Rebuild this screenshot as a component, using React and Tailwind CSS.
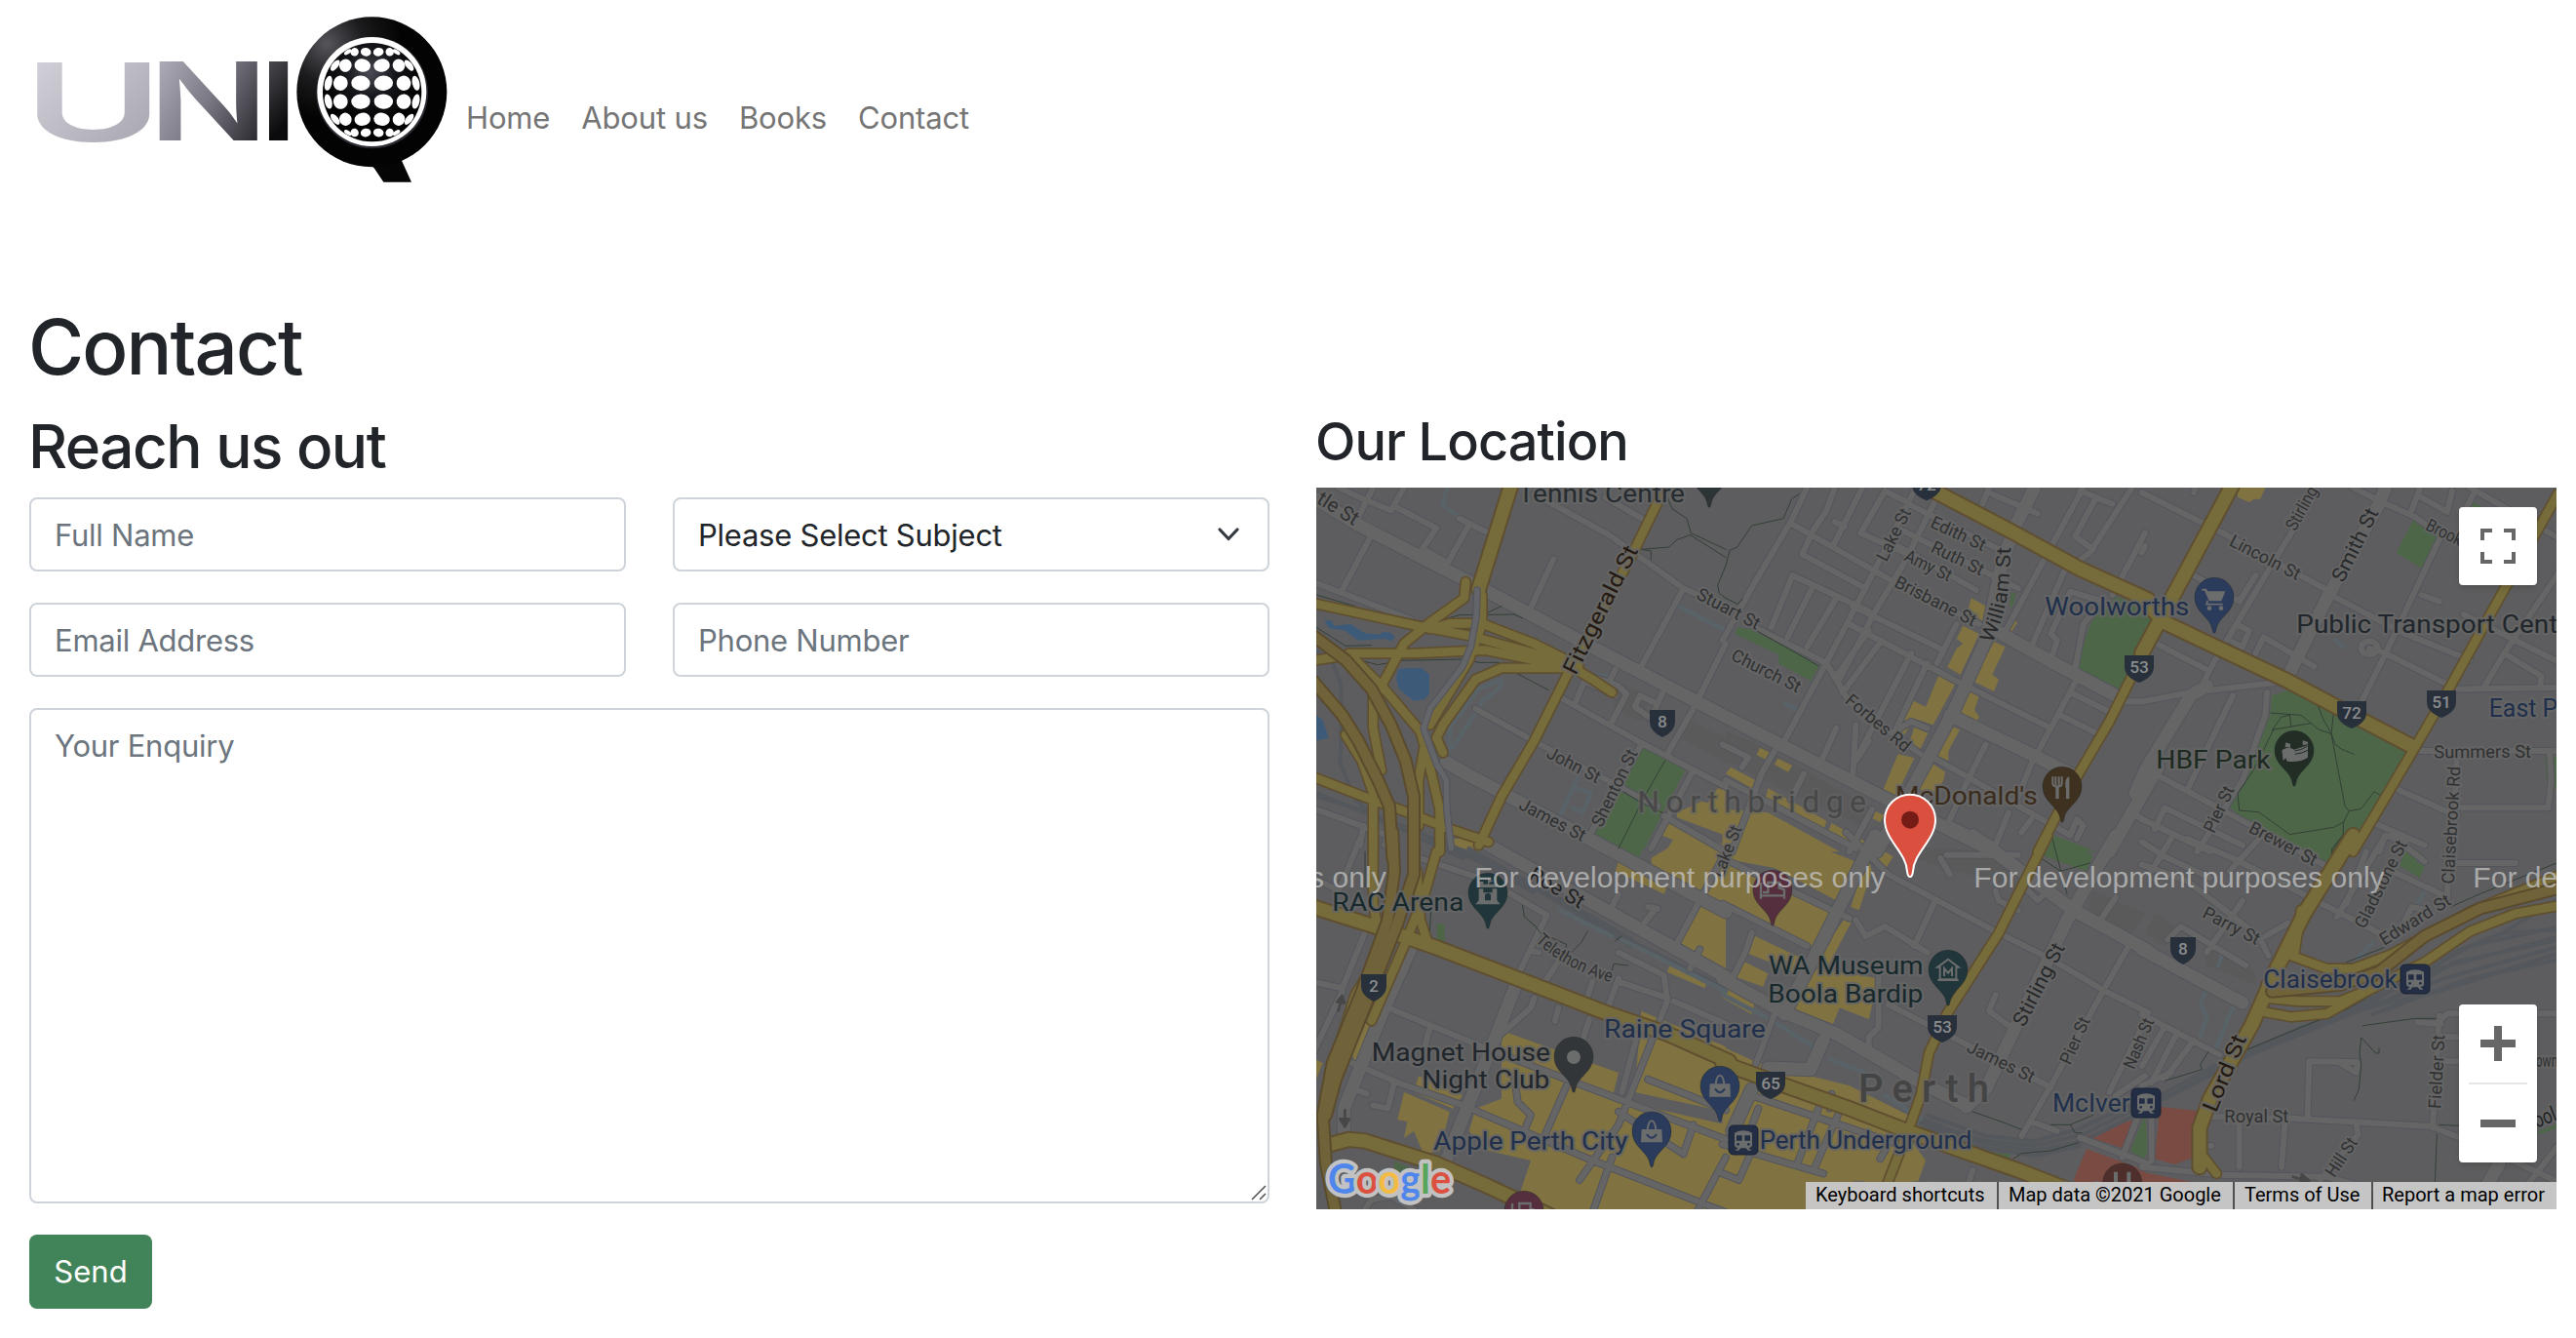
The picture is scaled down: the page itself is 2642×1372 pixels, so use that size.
import React from "react";

/* ---------- Logo ---------- */
const HOLES = [];
for (const lat of [-57, -34, -11, 11, 34, 57]) {
  for (const lon of [-68, -42, -14, 14, 42, 68]) {
    const a = (lat * Math.PI) / 180;
    const o = (lon * Math.PI) / 180;
    const k = Math.abs(lat) > 50 ? 0.55 : Math.abs(lat) > 30 ? 0.85 : 1;
    HOLES.push({
      x: 1085 + 148 * Math.cos(a) * Math.sin(o),
      y: 284 - 148 * Math.sin(a),
      rx: Math.max(4, 30 * Math.cos(o) * k),
      ry: Math.abs(lat) > 50 ? 13 : Math.abs(lat) > 30 ? 20 : 23,
      r: -lon * Math.sin(a),
    });
  }
}

function Logo() {
  return (
    <svg viewBox="0 0 1350 600" className="h-[200px] w-[450px] shrink-0" role="img" aria-label="UNIQ">
      <defs>
        <linearGradient id="gU" x1="0" y1="0" x2="1" y2="1">
          <stop offset="0" stopColor="#d9d8e0" />
          <stop offset="1" stopColor="#a09faa" />
        </linearGradient>
        <linearGradient id="gN" x1="0" y1="0.2" x2="1" y2="0.8">
          <stop offset="0" stopColor="#b5b3bf" />
          <stop offset="0.5" stopColor="#7a7883" />
          <stop offset="1" stopColor="#1e1d22" />
        </linearGradient>
        <linearGradient id="gI" x1="0" y1="0" x2="0.3" y2="1">
          <stop offset="0" stopColor="#66656c" />
          <stop offset="0.8" stopColor="#0b0b0d" />
        </linearGradient>
        <radialGradient id="gQ" cx="0.2" cy="0.18" r="0.5">
          <stop offset="0" stopColor="#55555b" />
          <stop offset="0.5" stopColor="#1b1b1d" />
          <stop offset="1" stopColor="#030303" />
        </radialGradient>
        <radialGradient id="gG" cx="0.48" cy="0.3" r="0.5">
          <stop offset="0" stopColor="#4a4b54" />
          <stop offset="0.5" stopColor="#15161a" />
          <stop offset="1" stopColor="#020202" />
        </radialGradient>
      </defs>
      <g fontFamily="Inter, sans-serif" fontWeight="600" fontSize="334">
        <text x="12" y="434" textLength="430" lengthAdjust="spacingAndGlyphs" fill="url(#gU)">U</text>
        <text x="395" y="433" textLength="372" lengthAdjust="spacingAndGlyphs" fill="url(#gN)">N</text>
        <text x="736" y="433" textLength="122" lengthAdjust="spacingAndGlyphs" fill="url(#gI)">I</text>
      </g>
      <path d="M1075 500L1092 518L1120 560H1206L1176 494L1190 470Z" fill="#050505" />
      <circle cx="1084" cy="283" r="231" fill="url(#gQ)" />
      <circle cx="1085" cy="285" r="172" fill="#2c2c33" />
      <circle cx="1084" cy="282" r="168" fill="#fff" />
      <circle cx="1085" cy="284" r="152" fill="url(#gG)" />
      {HOLES.map((h, i) => (
        <ellipse key={i} cx={h.x} cy={h.y} rx={h.rx} ry={h.ry} fill="#fff" transform={`rotate(${h.r} ${h.x} ${h.y})`} />
      ))}
    </svg>
  );
}

/* ---------- Map data: six tiles, coordinates local to each tile ---------- */
const TILES = [
  {
    x: 0, y: 0,
    green: ["M1030 858L1167 925L1040 1170H960L885 1130Z"],
    water: [
      "M55 470L75 467L85 485L135 480L180 508L225 512L235 503L260 507L272 520L262 532L240 525L158 530L120 500L70 493Z",
      "M280 620L300 615H355L378 635V695L362 712L330 717L285 680L276 650Z",
      "M30 760L50 775L68 830L35 838L20 835Z",
    ],
    shop: ["M1140 1060L1215 1025L1235 1030L1265 985L1290 990V1130L1140 1075Z", "M1110 1087L1162 1110L1145 1150L1093 1130Z", "M1185 1130L1290 1180H1165Z"],
    block: ["M960 660L1060 700L1030 780L945 740Z", "M1180 775L1290 830V905L1150 830Z"],
    stream: ["M432 60L418 115L470 150", "M1145 425L1290 500", "M600 650L530 680L440 800V870", "M600 650L595 675L540 720L450 860", "M835 950L780 1070M830 985L875 1000L850 1060L820 1045", "M880 635L930 640"],
    path: ["M1110 90L1125 125L1170 155L1183 200L1290 250M1183 207L1290 275", "M1183 205L1140 220L1115 243L1030 250L1060 255V280", "M30 390L150 425M320 472H400L470 452L640 450L665 462", "M30 490L120 547L200 545M180 595L220 605L290 592L480 588L530 598H590", "M640 628L745 683", "M1103 900L1040 1010L960 1170M975 995L1030 1030L1095 1060", "M545 450L600 425", "M1290 300L1265 360L1270 385L1290 400"],
    rail: ["M30 560L80 600L105 660L108 740L104 910L150 1020L260 1110", "M30 1010L200 1060L330 1130L480 1200", "M30 1000L180 1060L320 1110L460 1170"],
    minor: ["M100 60L185 100L260 130L300 60", "M205 60L160 150", "M275 120L400 185L355 250", "M470 155L550 195", "M500 175L435 290", "M370 255L430 290", "M200 205L110 375", "M20 350L320 465", "M760 280L690 430", "M700 80L930 205L1160 370L1290 430", "M920 90L1040 160", "M1160 370L1030 610", "M1290 540L1190 740L1110 880", "M1030 850L870 1130", "M520 740L700 840L1000 1000L1080 1040", "M780 705L1020 840L1290 980", "M830 715L855 655L950 700", "M875 640L960 670L985 695L940 780", "M950 620L935 650", "M1060 770L1010 735L1025 700L1080 725L1060 770M1080 725L1095 690", "M1190 930L1060 1170", "M1100 1070L1290 1180", "M30 1050L250 1130L240 1160M175 1100L165 1160"],
    mid: ["M20 90L160 175L520 360L840 530L1290 765", "M430 905L500 945L850 1130L1290 1365"],
    over: ["M525 375L522 460L505 550L480 610L380 740L360 800L400 910L430 960L432 1050L445 1170"],
    hw: ["M20 415L340 485L500 515L700 570L830 620", "M490 350L485 400L380 475L300 540L220 690", "M540 390V480L500 590L380 790", "M380 495L440 478H540L700 540L800 590", "M130 570L330 570L550 560L700 590L830 610", "M20 592L130 575", "M820 615H600L520 650L420 790L400 830L420 875", "M830 620L880 650L940 690", "M1090 85L1010 250L900 460L800 640L700 840L600 1010L530 1160", "M150 590L240 680L350 810L375 900L410 1050V1180", "M205 700V800L230 930", "M120 820L170 900L205 1000V1180", "M365 840L345 960V1100", "M20 950L200 1020L300 1055L440 1110L560 1150"],
    hwWide: ["M630 50L530 372", "M680 575L830 610"],
    mway: ["M20 515L120 590L200 680L260 790L305 900L330 1010V1200", "M20 655L110 760L160 840L220 960L255 1040L265 1200"],
  },
  {
    x: 1290, y: 0,
    green: ["M35 490L100 500L287 608L262 655L160 600L165 575L30 510Z", "M1130 465L1200 395L1290 420V560L1205 685L1080 615L1110 510Z", "M878 380L893 388L880 430L873 425Z", "M1010 1130L1140 1180H980Z"],
    shop: ["M755 400L807 428L790 470L745 440Z", "M730 485L780 510L722 635L682 612L710 555L730 540L710 525Z", "M885 465L897 475L875 510L858 495Z", "M825 535L860 550L820 635L840 650L825 687L760 655Z", "M657 632L708 660L638 790L580 770L550 820L525 815L575 715L615 735Z", "M745 682L780 700L765 745L780 765L770 783L707 750Z", "M683 790L720 805L685 870V900L637 880Z", "M580 797L622 815L597 867L563 850Z", "M530 880L580 892L520 1015L478 1005Z", "M627 903L675 935L670 960L640 1010L590 985Z", "M105 860L137 875L125 898L95 882Z", "M160 893L205 915L192 935L150 912Z", "M15 920L90 960L80 985L0 940Z", "M130 985L310 1085L300 1120L120 1030Z", "M325 1092L395 1130L380 1160L312 1128Z", "M460 1055L487 1068L475 1090L452 1078Z", "M0 1050L130 1060L350 1180H0Z", "M410 1140L445 1155L435 1180H395Z"],
    block: ["M0 810L100 850L330 980L440 1040L420 1100L200 1000L0 900Z"],
    stream: ["M185 725L215 740"],
    path: ["M225 80L203 95L177 155L80 177L35 243L12 253L0 300", "M0 400L35 418L52 403", "M95 500L285 608"],
    minor: ["M250 60L200 165L90 350L-10 530", "M335 60L310 130L270 190L235 265L430 370", "M200 170L500 340", "M420 60L335 230", "M335 165L365 180", "M585 60L460 310L330 560L180 840", "M490 70L415 200L550 260", "M650 90L550 290L460 440L350 650", "M560 110L860 260", "M490 70L560 105", "M540 190L820 330L900 370", "M530 240L770 375", "M500 340L780 480", "M390 425L670 560", "M380 480L700 650L1000 800", "M710 480L650 600", "M140 490L205 330L270 360L440 440", "M270 360L190 520", "M340 400L250 550", "M480 530L360 690", "M570 570L420 860L400 900", "M620 600L520 810L570 780L620 800", "M440 500L340 640", "M90 490L310 600L380 720L600 880", "M810 60L790 110", "M820 80L960 140", "M1100 60L850 520", "M1090 70L1190 110", "M1140 90L1075 210L1130 250", "M1250 60L1120 260L1040 320L940 550", "M1290 200L1190 390", "M1060 380L1000 510L1020 530L1000 590", "M1060 380L1160 410L1100 480L1075 620", "M1080 650L1000 800L940 910L900 1010", "M1060 690L1180 750", "M1030 760L1150 820", "M240 940L200 1020", "M400 790L390 960M440 840L400 900", "M340 800L290 910", "M150 870L110 940L20 1180", "M-10 850L70 890L50 920", "M800 850L740 970L690 1080", "M620 880L1060 1130", "M680 1090L830 1160L870 1060", "M940 1080L910 1120", "M1060 1130L1080 1080L1100 1100L1080 1140", "M1230 718H1290", "M0 960L400 1170", "M1250 1060L1290 1085", "M450 1050L380 1180"],
    mid: ["M-10 760L480 1010L830 1180", "M950 60L890 180L850 290L800 530L700 750L560 1010L465 1180", "M830 500L1010 600L1210 705", "M690 760L960 890L1060 940", "M1330 920L1180 1180"],
    hw: ["M1290 560L1180 780L1080 950L960 1180"],
    hwWide: ["M640 70L870 190L1090 310L1300 405"],
  },
  {
    x: 2580, y: 0,
    green: ["M390 700L440 683L590 750L810 870L630 1180L420 1150L280 1060L250 1035L290 970L385 760Z", "M825 160L908 220L862 315L773 260Z", "M1003 100L1045 125L1000 135Z", "M1230 880L1266 890V990L1235 960Z", "M0 450L20 460L0 520Z"],
    shop: ["M285 60H370L355 95H335L322 105L285 90Z"],
    stream: ["M585 530L610 550", "M150 330L200 350"],
    path: ["M388 753L480 760L535 805L573 817L585 850L605 865L643 880M445 760L450 795M392 805L420 765L445 760M392 805L510 785M530 725L545 765L573 817L580 755M573 817L615 1040L628 1055L665 1048L705 995L722 1005M628 1055L610 1090L580 1105L445 1127L350 1058L290 1053L285 1000L330 935L395 805M610 1090V1125L575 1180"],
    minor: ["M-10 75L230 195L560 375", "M530 70L370 330L210 600L180 660", "M640 60L730 105L830 150L900 200", "M910 210L740 570L660 730", "M845 65L820 130M850 90L930 135L945 70", "M850 390L905 410", "M590 400L800 510L1000 590", "M690 555L740 570L930 665", "M665 550A25 20 0 1 0 715 555A25 20 0 1 0 665 550", "M950 680L1280 675", "M845 870H1280", "M960 880L945 1180", "M970 1045H1240L1250 960L1245 880", "M1105 570L1220 640L1215 670", "M1280 310L1105 570L1045 670", "M980 450L1280 600", "M780 990L960 1070", "M700 1090L860 1160", "M-10 718L140 690L400 660", "M375 690L370 760L300 960L160 1180", "M270 700L130 990", "M30 940L560 1225", "M30 1110L60 1045L300 1160", "M-10 1080L200 1180", "M35 540L190 620", "M150 330L290 410L340 330", "M280 480L320 500L300 550L270 535", "M340 570L365 520L520 610", "M1000 60L1280 220", "M1010 80L980 140", "M155 60L150 75", "M720 1180L740 1130L800 1150", "M-10 260L0 240"],
    mid: ["M740 60L720 110L560 400L440 640", "M190 670L140 700L0 930L-30 1000"],
    hw: ["M1270 80L1090 400L940 670L830 860L700 1080L640 1180"],
    hwWide: ["M270 50L120 330L-10 570", "M-10 400L60 475L440 655", "M440 655L600 740L820 855"],
  },
  {
    x: 0, y: 1140,
    green: ["M400 262L425 262V318L402 310Z", "M270 990L350 1030L300 1050L270 1030Z", "M905 0H1050L1020 65Z"],
    shop: ["M430 0H570L530 40L440 20Z", "M960 70L1070 130L1060 60L1110 30L1150 -30L1290 20V420L1150 320L1230 180L1120 120L1100 170L950 100Z", "M600 590L960 720L940 800L1290 880V1140H640L690 990L560 960L500 900L520 830L600 800Z", "M300 780L440 840L410 960L360 970L330 900L300 920L310 870L280 865Z", "M345 730L480 790L450 830L330 780Z", "M1030 530L1290 640V840L1010 780Z", "M205 520L220 540L150 690L140 660Z", "M1120 380L1235 430L1225 460L1110 410Z", "M30 680L50 690L30 740Z"],
    block: [],
    stream: ["M790 340L740 420", "M780 220L940 300M970 310L1290 470"],
    path: ["M180 40V150M385 180L378 310", "M665 205L670 240L705 270L720 290L800 325L790 370", "M865 285L845 320L815 350", "M940 405L945 385L990 390M950 315L970 300"],
    rail: ["M380 0L700 150L1000 330", "M400 0L720 150L1000 310", "M500 30L950 290L1290 460", "M440 20L700 165"],
    minor: ["M20 120L100 160L165 0", "M20 440L110 460L200 240", "M20 660L110 470", "M250 520L540 640L800 740L1290 925", "M380 580L350 690", "M700 490L690 520L600 600", "M140 690L280 750L480 820L880 990L1290 1150", "M270 750L250 830L205 820", "M145 770L185 785", "M350 60L560 130L740 235L650 420", "M690 345L715 350", "M780 370L720 460", "M775 520L765 560M870 555L850 620L810 720", "M880 440L860 500", "M960 430L920 540", "M960 350L1100 420L1110 500L960 880L840 1050", "M640 740L650 810L690 850L670 900", "M800 760L730 920", "M1050 740L1290 835", "M940 980L880 1150", "M1030 560L970 780", "M1290 40L1130 340", "M930 30L1290 230", "M960 170L930 230M1075 215L1030 270M1080 215L1050 210", "M1210 340L1180 400", "M960 840L1160 970L1190 880", "M1290 980L1200 1150", "M1130 500L1290 570M960 440L1110 490", "M180 1140L200 1110L260 1100L330 1140"],
    mid: ["M560 20L940 230L1290 425", "M320 340L240 520L115 830V900", "M640 460L570 640L425 1000"],
    hw: ["M400 40L360 180L300 330L200 560", "M205 -20V200L220 280", "M340 100L350 250L370 310", "M200 400L150 480L100 640"],
    hwWide: ["M20 210L210 270L400 335L700 450L920 535L1110 600L1300 685", "M75 940L130 925L180 930L400 1000L560 1070L750 1160"],
    mway: ["M265 -20L270 100L250 250L170 470L80 690L50 850L60 1000L90 1150", "M330 -20V110L280 260L190 490L90 740L60 850"],
    arrow: ["M98 530L107 492M94 502L109 483L117 505Z", "M118 835V870M103 862L118 886L131 862Z"],
  },
  {
    x: 1290, y: 1140,
    green: ["M1005 0L1130 50L1110 100L970 50Z", "M760 960L875 970L865 1000L800 985Z", "M1245 960L1290 850V990Z"],
    red: ["M1110 915L1265 860L1220 952Z", "M1110 955L1290 1020V1140H1150L1070 1050Z"],
    shop: ["M-10 -20L100 -50L410 75L350 195L150 90L-10 60Z", "M-10 70L330 220L270 340L110 260L-10 200Z", "M90 300L260 380L240 420L60 350Z", "M50 375L130 415L115 455L30 425Z", "M370 240L390 250L310 400L270 380Z", "M280 400L470 430L440 555L350 520L330 570L200 520Z", "M435 50L385 210L410 220L450 100Z", "M480 35L515 55L490 95L460 75Z", "M-10 450L90 500L80 540L-10 490Z", "M-10 640L100 690L380 760L560 850L550 900L615 990L590 1060L560 1140H-10Z"],
    block: ["M480 20L830 40L900 150L640 80Z", "M1130 160L1290 230L1250 290L1110 220Z"],
    stream: ["M-10 480L125 550M150 565L300 660M320 680L430 720M490 790L600 860"],
    path: ["M1005 0L1030 95L1050 170M970 60L1030 100L1120 75", "M760 840L860 875L910 895", "M1000 880H1060L1130 850M1060 880L1075 905H1095", "M885 985L910 968L1000 960L1085 935"],
    rail: ["M600 860L700 900L800 930L950 945L1100 910L1300 810", "M600 875L760 930L950 960L1100 930L1300 830", "M610 890L760 945L950 975L1090 945", "M620 850L800 915L950 930L1080 895L1300 795"],
    minor: ["M370 -20L500 110L820 280L1000 370L1160 465L1300 535", "M640 200L580 330", "M400 250L430 300L490 270L620 350", "M470 420V580L440 610V640M500 510L1000 765", "M830 480L810 530L870 575", "M1240 330L1160 470L1000 760L910 915", "M940 870L1020 900", "M150 540L90 700", "M-10 200L250 330", "M80 290L60 350L20 430", "M-10 60L380 245", "M80 790L560 950", "M100 830L70 910", "M285 830L220 1000M345 850L270 1020", "M-10 940L300 1030", "M490 960L475 985", "M325 785L320 830", "M80 960L40 1050L-10 1030", "M1090 920L1300 1000", "M1290 730L1200 790M1290 560L1180 780", "M1270 850L1220 980", "M1200 180L1160 240", "M760 1020L740 1080", "M830 160L840 190L900 220M920 150L960 190L990 160L1100 230", "M660 60L690 110M680 50L900 50"],
    mid: ["M460 -10L300 310L180 540", "M-10 430L170 530L340 600L600 750L740 820", "M760 -10L1070 220L1300 345", "M1200 -10L1050 250L800 770L740 825", "M300 620L260 710L130 705", "M80 770L20 900"],
    hw: ["M990 -10L840 290L680 540L625 660L600 790L560 900L490 1080"],
    hwWide: ["M-10 690L140 745L380 830L560 900L700 950L900 1020L1080 1090"],
  },
  {
    x: 2580, y: 1140,
    green: ["M400 0H600L570 80L480 50Z", "M800 20L855 45L835 70L860 85L845 120L785 85Z", "M620 1070H960L1020 1140H640Z", "M1210 910L1266 890V880L1210 900Z", "M0 850V980L10 960Z"],
    red: ["M45 825L170 838L150 980L90 1002L30 985Z", "M-10 1025L140 1055L150 1140H-10Z"],
    block: ["M30 230L110 280L60 330L0 290Z", "M180 320L340 410V450L190 390Z"],
    stream: ["M190 460L170 510L190 550L170 610", "M270 520L220 640", "M860 160L840 200", "M700 320L655 365", "M240 350L225 390"],
    path: ["M600 0L575 30V80", "M300 655L480 580L620 525L680 490M195 655L170 695L175 710L60 745", "M670 575L830 553H895", "M643 805L658 770L665 700L660 660L665 612L710 660H720V645", "M905 880L966 883M898 910L892 1060", "M940 210L1030 170L1266 75", "M480 355L550 385M620 380L735 335"],
    rail: ["M-10 820L250 680L650 510L900 400L1280 300", "M-10 835L260 690L680 520L920 430L1280 330", "M60 800L330 660L700 500L1000 330L1280 270", "M600 540L900 470L1280 350", "M700 540L1000 430L1280 370", "M680 500L900 370L1100 290L1280 280", "M750 500L950 380L1280 310", "M1100 290L1280 180"],
    minor: ["M-10 540L230 665", "M60 580L-10 700M100 595L20 750M150 620L60 740M-10 760L80 720", "M200 855L450 860L880 885L980 925", "M500 860L505 685L655 688L650 720L600 690", "M290 870V1010", "M430 880L420 1010", "M-10 1010L250 1035L560 1040L700 1080", "M650 880L655 910L540 1050", "M905 545L885 890", "M840 565L910 570", "M905 560L930 538H1280", "M910 610H966", "M915 685H980", "M20 860L20 990", "M-10 80L130 130L350 300L380 360", "M-10 10L70 60L200 120M20 100L80 0", "M130 0L270 60L740 300", "M260 100L360 -10", "M300 190L190 350", "M70 310L110 270L310 390", "M440 260L370 300", "M740 -10L590 240M680 40L620 200", "M760 -10L860 70", "M760 100L930 180L935 0", "M940 75H1140", "M800 250L820 210L870 220", "M195 945H205", "M980 920L1280 1060M1266 950L1150 1100"],
    mid: ["M-10 340L300 505", "M1090 1000L1050 1070"],
    hw: ["M450 360L560 400H640L760 355L1000 225L1280 110", "M350 530L450 548L560 538L680 470L860 380L1000 285L1140 230L1280 205", "M370 490L470 500H600L700 460", "M480 220L460 350", "M165 960L220 1030"],
    hwWide: ["M640 -10L490 230L400 410L330 570L200 800L168 890V1010", "M380 450L600 440"],
    mway: ["M390 470L600 450L720 410L860 300L1030 215L1280 150"],
    arrow: ["M455 1040L490 1050M482 1033L505 1052L480 1056Z"],
  },
];

const LAYERS = [
  ["block", { fill: "#5a5a5b" }],
  ["green", { fill: "#4d6648" }],
  ["red", { fill: "#7a4b42" }],
  ["shop", { fill: "#807341" }],
  ["water", { fill: "#3d5b79" }],
  ["rail", { stroke: "#54575b", strokeWidth: 12, fill: "none" }],
  ["stream", { stroke: "#596267", strokeWidth: 14, fill: "none" }],
  ["minor", { stroke: "#54555c", strokeWidth: 24, fill: "none" }],
  ["mid", { stroke: "#54555c", strokeWidth: 45, fill: "none" }],
  ["minor", { stroke: "#656565", strokeWidth: 18, fill: "none" }],
  ["mid", { stroke: "#656565", strokeWidth: 39, fill: "none" }],
  ["path", { stroke: "#334036", strokeWidth: 3, fill: "none" }],
  ["hw", { stroke: "#5f4f30", strokeWidth: 36, fill: "none" }],
  ["hwWide", { stroke: "#5f4f30", strokeWidth: 52, fill: "none" }],
  ["hw", { stroke: "#766b3b", strokeWidth: 26, fill: "none" }],
  ["hwWide", { stroke: "#766b3b", strokeWidth: 40, fill: "none" }],
  ["mway", { stroke: "#5a4b2e", strokeWidth: 42, fill: "none" }],
  ["mway", { stroke: "#706339", strokeWidth: 30, fill: "none" }],
  ["over", { stroke: "#54555c", strokeWidth: 23, fill: "none" }],
  ["over", { stroke: "#646568", strokeWidth: 16, fill: "none" }],
  ["arrow", { stroke: "#474747", strokeWidth: 8, fill: "#474747" }],
];

/* Labels: text, baseline start, baseline end, size, colour, (weight) */
const ST = "#303132";
const DK = "#20262b";
const BL = "#202f4c";
const LABELS = [
  ["tle St", 28, 105, 145, 178, 62, ST],
  ["Tennis Centre", 650, 105, 1164, 105, 80, "#262c2f"],
  ["Fitzgerald St", 828, 640, 1022, 252, 68, "#241a12"],
  ["John St", 735, 888, 893, 970, 54, ST],
  ["Shenton St", 908, 1108, 1020, 876, 54, ST],
  ["James St", 650, 1046, 847, 1150, 54, ST],
  ["Stuart St", 1196, 400, 1384, 498, 54, ST],
  ["Northbridge", 1018, 1060, 1722, 1060, 96, "#484848"],
  ["Lake St", 1784, 290, 1862, 135, 54, ST],
  ["Edith St", 1916, 180, 2080, 256, 54, ST],
  ["Ruth St", 1918, 256, 2074, 332, 54, ST],
  ["Amy St", 1836, 283, 1975, 350, 54, ST],
  ["Brisbane St", 1805, 363, 2050, 488, 54, ST],
  ["Church St", 1303, 588, 1510, 692, 54, ST],
  ["Forbes Rd", 1654, 720, 1840, 876, 54, ST],
  ["Woolworths", 2272, 454, 2716, 454, 80, BL],
  ["McDonald's", 1812, 1035, 2249, 1035, 80, "#3b2b1b"],
  ["Lincoln St", 2836, 236, 3047, 346, 54, ST],
  ["Stirling", 3043, 196, 3113, 68, 54, ST],
  ["Smith St", 3190, 355, 3300, 136, 62, "#28292a"],
  ["Brook", 3440, 188, 3546, 240, 54, ST],
  ["Public Transport Cent", 3046, 507, 3850, 507, 80, DK],
  ["East P", 3638, 764, 3850, 764, 78, BL],
  ["Summers St", 3469, 892, 3768, 890, 54, ST],
  ["HBF Park", 2614, 925, 2966, 925, 80, "#1c2a20"],
  ["Pier St", 2792, 1126, 2856, 988, 54, ST],
  ["Brewer St", 2896, 1118, 3098, 1225, 54, ST],
  ["Claisebrook Rd", 3530, 1280, 3550, 918, 54, ST],
  ["RAC Arena", 79, 1363, 484, 1363, 80, "#17292d"],
  ["Roe St", 680, 1262, 840, 1356, 62, "#1f2021"],
  ["Raine Square", 915, 1752, 1412, 1752, 80, BL],
  ["Magnet House", 200, 1824, 750, 1824, 80, DK],
  ["Night Club", 355, 1908, 748, 1908, 80, DK],
  ["Apple Perth City", 391, 2098, 988, 2098, 80, BL],
  ["Lake St", 1280, 1262, 1340, 1108, 54, ST],
  ["WA Museum", 1422, 1558, 1898, 1558, 80, "#17292d"],
  ["Boola Bardip", 1420, 1643, 1897, 1643, 80, "#17292d"],
  ["Perth", 1698, 1949, 2100, 1949, 120, "#444444", 500],
  ["Perth Underground", 1394, 2093, 2047, 2093, 78, BL],
  ["James St", 2028, 1793, 2230, 1892, 54, ST],
  ["Stirling St", 2208, 1722, 2335, 1474, 62, "#28292a"],
  ["Pier St", 2350, 1838, 2412, 1698, 54, ST],
  ["McIver", 2295, 1979, 2534, 1979, 78, BL],
  ["Nash St", 2546, 1852, 2608, 1702, 54, ST],
  ["Gladstone St", 3256, 1420, 3388, 1156, 54, ST],
  ["Parry St", 2753, 1380, 2922, 1468, 54, ST],
  ["Edward St", 3316, 1470, 3525, 1340, 54, ST],
  ["Claisebrook", 2944, 1598, 3356, 1598, 80, BL],
  ["Lord St", 2798, 1985, 2893, 1754, 68, "#241a12"],
  ["Royal St", 2824, 2014, 3022, 2014, 54, ST],
  ["Fielder St", 3490, 1972, 3502, 1744, 54, ST],
  ["Hill St", 3163, 2185, 3236, 2074, 54, ST],
  ["own", 3782, 1842, 3850, 1842, 54, ST],
  ["ool", 3785, 2030, 3850, 2005, 66, "#202122"],
  ["Royal Perth Hospital", 1678, 2256, 2440, 2256, 78, "#55302c"],
  ["Wellington", 3135, 2290, 3520, 2290, 90, "#555"],
];

const CURVED = [
  ["William St", "M2110 540C2150 450 2165 380 2166 250", 62, "#28292a", 304],
  ["Telethon Ave", "M704 1456C760 1510 840 1555 946 1585", 54, ST, 266],
];

const SHIELDS = [
  [1095, 744, "8"], [1908, 16, "72"], [2562, 576, "53"], [3216, 717, "72"], [3492, 684, "51"],
  [207, 1557, "2"], [1956, 1683, "53"], [1428, 1857, "65"], [2697, 1443, "8"],
];

const PINS = [
  [2793, 397, "#2b3b5c", "cart"], [2325, 979, "#3f311f", "fork"], [3039, 868, "#222e25", "stadium"],
  [558, 1306, "#20363a", "arena"], [822, 1810, "#323639", "dot"], [1272, 1900, "#2b3b5c", "bag"],
  [1062, 2040, "#2b3b5c", "bag"], [1434, 1297, "#562f3e", "bed"], [1974, 1543, "#20363a", "museum"],
  [669, 2284, "#562f3e", "bed"], [2510, 2199, "#4f2f2b", "hosp"], [1239, 10, "#2d3436", "none"],
];

const G = "#6b6c6c";
function Glyph({ kind }) {
  switch (kind) {
    case "cart":
      return (
        <g fill={G}>
          <path d="M-38-26H-24L-20-18H34L22 12H-16L-30-20H-38Z" />
          <path d="M-20 10L-24 22H26" fill="none" stroke={G} strokeWidth="5" />
          <circle cx="-15" cy="34" r="7" /><circle cx="21" cy="34" r="7" />
        </g>
      );
    case "fork":
      return (
        <g fill="none" stroke={G} strokeWidth="6">
          <path d="M-29-30V-8Q-29 0-15 0Q-1 0-1-8V-30M-20-30V-4M-10-30V-4" /><path d="M-15 0V38" strokeWidth="10" />
          <path d="M22-30V38H12V4H10V-12Q12-28 22-30Z" fill={G} stroke="none" />
        </g>
      );
    case "stadium":
      return (
        <g fill={G}>
          <path d="M-38 0Q-20-14 0-2L42-16V22Q20 38-22 34L-26 24L-34 32Z" />
          <path d="M-26-24L-12-20V-8L-28-10ZM26-30L42-26V-18L26-16Z" />
          <path d="M2 2Q20 0 40-12M2 12Q24 10 42 0" fill="none" stroke="#222e25" strokeWidth="3" />
        </g>
      );
    case "arena":
      return <path d="M-38 36L-28 24V-12H-14V0H14V-12H28V24L38 36ZM-28-20V-34H-14V-26H0V-44L16-36L4-30V-26H28V-16H-28Z M-9 24V6Q0-4 9 6V24Z" fill={G} fillRule="evenodd" />;
    case "dot":
      return <circle r="21" cy="2" fill={G} />;
    case "bag":
      return (
        <g>
          <path d="M-31-6H31L33 34H-33Z" fill={G} />
          <path d="M-13-4Q-10-32 0-32Q10-32 13-4" fill="none" stroke={G} strokeWidth="6" />
          <path d="M-15 9Q0 32 15 9" fill="none" stroke="#2b3b5c" strokeWidth="6" />
        </g>
      );
    case "bed":
      return <path d="M-36-22V28M-36 18H36M36 28V0L20-6V-22H-18M-14-22V8H-30" fill="none" stroke={G} strokeWidth="7" />;
    case "museum":
      return (
        <g fill="none" stroke={G} strokeWidth="6">
          <path d="M-32-8L0-32L32-8H25V30H-25V-8Z" /><path d="M-32 32H32" />
          <path d="M-12 20V-4L0 10L12-4V20" />
        </g>
      );
    case "hosp":
      return <path d="M-20-34V20M20-34V20" fill="none" stroke={G} strokeWidth="12" />;
    default:
      return null;
  }
}

function Train({ x, y }) {
  return (
    <g transform={`translate(${x} ${y})`}>
      <rect x="-45" y="-45" width="90" height="90" rx="14" fill="#232d44" stroke="#1b2437" strokeWidth="3" />
      <path d="M-27-22Q0-36 27-22V18Q24 24 16 24L26 32H14L8 25H-8L-14 32H-26L-16 24Q-24 24-27 18Z" fill={G} />
      <path d="M-21-14H-4V2H-21ZM4-14H21V2H4Z" fill="#232d44" />
      <circle cx="-16" cy="13" r="4" fill="#232d44" /><circle cx="16" cy="13" r="4" fill="#232d44" />
    </g>
  );
}

function Label({ d: [t, x1, y1, x2, y2, size, fill, weight] }) {
  const len = Math.hypot(x2 - x1, y2 - y1);
  const ang = (Math.atan2(y2 - y1, x2 - x1) * 180) / Math.PI;
  const spaced = t === "Northbridge" || t === "Perth";
  return (
    <text
      transform={`translate(${x1} ${y1}) rotate(${ang})`}
      fontSize={size} fill={fill} fontWeight={weight || 400}
      textLength={len} lengthAdjust={spaced ? "spacing" : "spacingAndGlyphs"}
      stroke="#656565" strokeOpacity={spaced ? 0.5 : 0.85} strokeWidth="13" strokeLinejoin="round" paintOrder="stroke"
    >
      {t}
    </text>
  );
}

function MapDrawing() {
  return (
    <svg viewBox="30 60 3816 2220" className="block h-[740px] w-[1272px] bg-[#5d5d5f]" fontFamily="Roboto, sans-serif">
      <g strokeLinejoin="round" strokeLinecap="round">
        {LAYERS.map(([key, attrs], i) => (
          <g key={i} {...attrs}>
            {TILES.map((t) =>
              t[key] && t[key].length ? (
                <path key={t.x + "-" + t.y} d={t[key].join("")} transform={`translate(${t.x} ${t.y})`} />
              ) : null
            )}
          </g>
        ))}
      </g>
      {SHIELDS.map(([x, y, n], i) => {
        const w = n.length > 1 ? 45 : 39;
        return (
          <g key={i} transform={`translate(${x} ${y})`}>
            <path d={`M${-w} 0H${w}V36Q${w} 66 0 84Q${-w} 66 ${-w} 36Z`} fill="#28303c" />
            <text y="53" textAnchor="middle" fontSize="52" fontWeight="500" fill="#8a8b8c">{n}</text>
          </g>
        );
      })}
      {LABELS.map((d, i) => <Label key={i} d={d} />)}
      {CURVED.map(([t, d, size, fill, len], i) => (
        <g key={i}>
          <path id={"curve" + i} d={d} fill="none" />
          <text fontSize={size} fill={fill} stroke="#656565" strokeOpacity="0.85" strokeWidth="13" strokeLinejoin="round" paintOrder="stroke">
            <textPath href={"#curve" + i} textLength={len} lengthAdjust="spacingAndGlyphs">{t}</textPath>
          </text>
        </g>
      ))}
      {PINS.map(([x, y, c, kind], i) => (
        <g key={i} transform={`translate(${x} ${y})`}>
          <path d="M0 111C-3 111-5 104-6 98C-12 62-60 48-60 0A60 60 0 1 1 60 0C60 48 12 62 6 98C5 104 3 111 0 111Z" fill={c} stroke="#1b2226" strokeOpacity="0.4" strokeWidth="3" />
          <Glyph kind={kind} />
        </g>
      ))}
      <Train x={1344} y={2067} />
      <Train x={2583} y={1953} />
      <Train x={3411} y={1572} />

      <g fontFamily="'Liberation Sans', Arial, sans-serif" fontSize="88" fill="#c4c4c4" fillOpacity="0.75">
        {[-1019, 517, 2053, 3589].map((x) => (
          <text key={x} x={x} y="1291" textLength="1264" lengthAdjust="spacingAndGlyphs">For development purposes only</text>
        ))}
      </g>

      <g transform="translate(1857 1082)">
        <path d="M0 175C-6 175-8 168-9 158C-12 100-78 62-78 0A78 78 0 1 1 78 0C78 62 12 100 9 158C8 168 6 175 0 175Z" fill="#db4f3f" stroke="#fff" strokeWidth="6" />
        <circle r="27" fill="#751c17" />
      </g>

      <text x="66" y="2232" fontFamily="Lato, sans-serif" fontWeight="700" fontSize="124" textLength="378" lengthAdjust="spacingAndGlyphs" stroke="#c2c2c2" strokeWidth="25" strokeLinejoin="round" paintOrder="stroke">
        <tspan fill="#4f86ec">G</tspan><tspan fill="#dc5040">o</tspan><tspan fill="#f3bb41">o</tspan><tspan fill="#4f86ec">g</tspan><tspan fill="#58a55c">l</tspan><tspan fill="#dc5040">e</tspan>
      </text>
    </svg>
  );
}

function LocationMap() {
  return (
    <div className="relative h-[740px] w-[1272px] overflow-hidden">
      <MapDrawing />
      <button aria-label="Toggle fullscreen" className="absolute top-5 right-5 flex size-20 items-center justify-center rounded bg-white shadow-md">
        <svg viewBox="0 0 36 36" className="size-9" fill="none" stroke="#666" strokeWidth="4">
          <path d="M2 12V2H12M24 2H34V12M34 24V34H24M12 34H2V24" />
        </svg>
      </button>
      <div className="absolute right-5 bottom-12 flex h-[162px] w-20 flex-col items-center rounded bg-white shadow-md">
        <button aria-label="Zoom in" className="flex h-20 w-full items-center justify-center">
          <svg viewBox="0 0 36 36" className="size-9" stroke="#666" strokeWidth="8"><path d="M18 0V36M0 18H36" /></svg>
        </button>
        <div className="h-0.5 w-[60px] bg-[#e6e6e6]" />
        <button aria-label="Zoom out" className="flex h-20 w-full items-center justify-center">
          <svg viewBox="0 0 36 36" className="size-9" stroke="#666" strokeWidth="8"><path d="M0 18H36" /></svg>
        </button>
      </div>
      <div className="absolute right-0 bottom-0 flex h-7 gap-0.5 bg-[#4a4a4a]/60 font-[Roboto,sans-serif] text-[20px] leading-[27px] whitespace-nowrap text-black">
        <span className="w-[196px] bg-[#cbcbcb]/95 pl-[10px]">Keyboard shortcuts</span>
        <span className="w-[240px] bg-[#cbcbcb]/95 pl-[10px]">Map data ©2021 Google</span>
        <span className="w-[140px] bg-[#cbcbcb]/95 pl-[10px]">Terms of Use</span>
        <span className="w-[188px] bg-[#cbcbcb]/95 pl-[9px]">Report a map error</span>
      </div>
    </div>
  );
}

/* ---------- Page ---------- */
const FIELD =
  "block w-full rounded-lg border-2 border-[#ced4da] bg-white px-6 text-[31px] tracking-[-0.25px] text-[#212529] outline-none placeholder:text-[#6c757d] placeholder:opacity-100";

export default function App() {
  return (
    <div className="h-[1372px] w-[2642px] overflow-hidden bg-white font-[Inter,sans-serif] text-[#212529]">
      <header className="flex h-[305px] items-start pl-5">
        <Logo />
        <nav className="flex gap-8 pt-[97px] pl-2 text-[31px] leading-[48px] tracking-[-0.15px] text-[#757575]">
          <a href="#home">Home</a>
          <a href="#about">About us</a>
          <a href="#books">Books</a>
          <a href="#contact">Contact</a>
        </nav>
      </header>
      <main className="px-[30px]">
        <h1 className="mb-4 -ml-px h-24 pt-[3px] text-[78px] leading-[96px] font-medium tracking-[-1.9px]">Contact</h1>
        <div className="grid grid-cols-[1272px_1272px] gap-x-12">
          <section>
            <h2 className="mb-4 -ml-px h-[77px] pt-0.5 text-[62px] leading-[77px] font-medium tracking-[-1.5px]">Reach us out</h2>
            <form className="grid grid-cols-2 gap-x-12 gap-y-8" onSubmit={(e) => e.preventDefault()}>
              <input className={FIELD + " h-[76px]"} placeholder="Full Name" />
              <div className="relative">
                <select className={FIELD + " h-[76px] appearance-none pt-0.5"}>
                  <option>Please Select Subject</option>
                </select>
                <svg viewBox="0 0 24 16" className="pointer-events-none absolute top-[30px] right-[30px] h-4 w-6" fill="none" stroke="#343a40" strokeWidth="3.2" strokeLinecap="round" strokeLinejoin="round">
                  <path d="M3 3L12 12.500L21 3" />
                </svg>
              </div>
              <input className={FIELD + " h-[76px]"} placeholder="Email Address" />
              <input className={FIELD + " h-[76px]"} placeholder="Phone Number" />
              <div className="relative col-span-2">
                <textarea className={FIELD + " h-[508px] resize-none py-[13px] leading-[48px]"} placeholder="Your Enquiry" />
                <svg viewBox="0 0 16 16" className="pointer-events-none absolute right-[3px] bottom-[3px] size-4" stroke="#555" strokeWidth="1.6">
                  <path d="M1 15L15 1M9 15L15 9" />
                </svg>
              </div>
              <button className="h-[76px] w-[126px] rounded-lg bg-[#428459] pt-px text-[31px] text-white">Send</button>
            </form>
          </section>
          <section>
            <h3 className="mb-4 -ml-px h-[67px] pt-0.5 text-[54px] leading-[67px] font-medium tracking-[-0.9px]">Our Location</h3>
            <LocationMap />
          </section>
        </div>
      </main>
    </div>
  );
}
